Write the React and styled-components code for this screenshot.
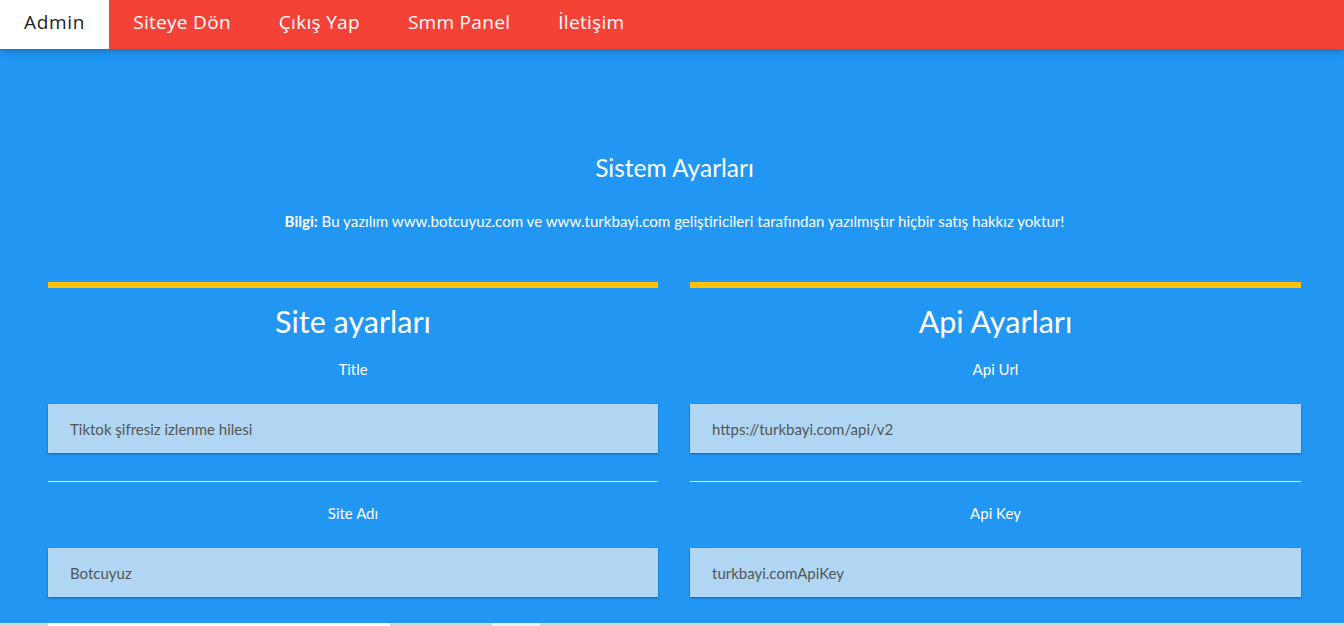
import React from "react";
import styled, { createGlobalStyle } from "styled-components";

const GlobalStyle = createGlobalStyle`
  html, body {
    margin: 0;
    padding: 0;
    background: #2196f3;
    overflow: hidden;
  }
  * { box-sizing: border-box; }
`;

const Page = styled.div`
  width: 1344px;
  height: 626px;
  overflow: hidden;
  font-family: Lato, "Open Sans", sans-serif;
  background: #2196f3;
  color: #fff;
`;

const TopBar = styled.nav`
  position: relative;
  z-index: 2;
  display: flex;
  height: 49px;
  background: #f44336;
  box-shadow: 0 2px 5px rgba(0, 0, 0, 0.16), 0 2px 10px rgba(0, 0, 0, 0.12);
`;

const NavItem = styled.a`
  display: flex;
  align-items: center;
  padding: 0 24px 5px;
  font-family: "Open Sans", sans-serif;
  font-size: 19px;
  font-weight: 400;
  letter-spacing: ${(p) => (p.$active ? "0.7px" : "0.3px")};
  text-decoration: none;
  color: ${(p) => (p.$active ? "#222" : "#fff")};
  background: ${(p) => (p.$active ? "#fff" : "transparent")};
`;

const Main = styled.main`
  padding: 102px 43px 0 48px;
  text-align: center;
`;

const PageTitle = styled.h2`
  margin: 0;
  font-size: 24.5px;
  line-height: 34px;
  font-weight: 400;
`;

const Info = styled.p`
  margin: 26px 0 0;
  font-size: 15.1px;
  line-height: 21px;
  b { font-weight: 700; }
`;

const Columns = styled.div`
  display: grid;
  grid-template-columns: 610px 611px;
  column-gap: 32px;
  margin-top: 50px;
`;

const Column = styled.section`
  display: flex;
  flex-direction: column;
  border-top: 6px solid #ffc107;
`;

const ColumnTitle = styled.h1`
  margin: 11px 0 0;
  font-size: 30.5px;
  line-height: 45px;
  font-weight: 400;
`;

const Label = styled.label`
  display: block;
  margin-top: ${(p) => p.$gap}px;
  font-size: 15px;
  line-height: 21px;
`;

const Field = styled.input`
  display: block;
  width: 100%;
  height: 49px;
  margin-top: ${(p) => p.$gap}px;
  padding: 0 22px;
  border: none;
  outline: none;
  background: #b0d6f3;
  box-shadow: 0 1px 2px rgba(0, 0, 0, 0.35);
  font-family: Lato, sans-serif;
  font-size: 15px;
  color: #555;
`;

const Rule = styled.hr`
  margin: 28px 0 0;
  border: none;
  border-top: 1px solid #eaf4fd;
`;

const NextStrip = styled.div`
  display: flex;
  height: 20px;
  margin-top: 26px;
  background: #d4d4d4;
`;

const StripBlock = styled.div`
  width: ${(p) => p.$w}px;
  margin-left: ${(p) => p.$ml}px;
  background: ${(p) => p.$bg};
`;

const sections = [
  {
    title: "Site ayarları",
    fields: [
      { label: "Title", value: "Tiktok şifresiz izlenme hilesi" },
      { label: "Site Adı", value: "Botcuyuz" },
    ],
  },
  {
    title: "Api Ayarları",
    fields: [
      { label: "Api Url", value: "https://turkbayi.com/api/v2" },
      { label: "Api Key", value: "turkbayi.comApiKey" },
    ],
  },
];

export default function App() {
  return (
    <Page>
      <GlobalStyle />
      <TopBar>
        <NavItem $active href="#">Admin</NavItem>
        <NavItem href="#">Siteye Dön</NavItem>
        <NavItem href="#">Çıkış Yap</NavItem>
        <NavItem href="#">Smm Panel</NavItem>
        <NavItem href="#">İletişim</NavItem>
      </TopBar>
      <Main>
        <PageTitle>Sistem Ayarları</PageTitle>
        <Info>
          <b>Bilgi:</b> Bu yazılım www.botcuyuz.com ve www.turkbayi.com geliştiricileri tarafından yazılmıştır hiçbir satış hakkız yoktur!
        </Info>
        <Columns>
          {sections.map((s) => (
            <Column key={s.title}>
              <ColumnTitle>{s.title}</ColumnTitle>
              {s.fields.map((f, i) => (
                <React.Fragment key={f.label}>
                  {i > 0 && <Rule />}
                  <Label $gap={i === 0 ? 15 : 21}>{f.label}</Label>
                  <Field $gap={24} defaultValue={f.value} />
                </React.Fragment>
              ))}
            </Column>
          ))}
        </Columns>
      </Main>
      <NextStrip>
        <StripBlock $ml={48} $w={342} $bg="#ffffff" />
        <StripBlock $ml={102} $w={48} $bg="#efefef" />
      </NextStrip>
    </Page>
  );
}
